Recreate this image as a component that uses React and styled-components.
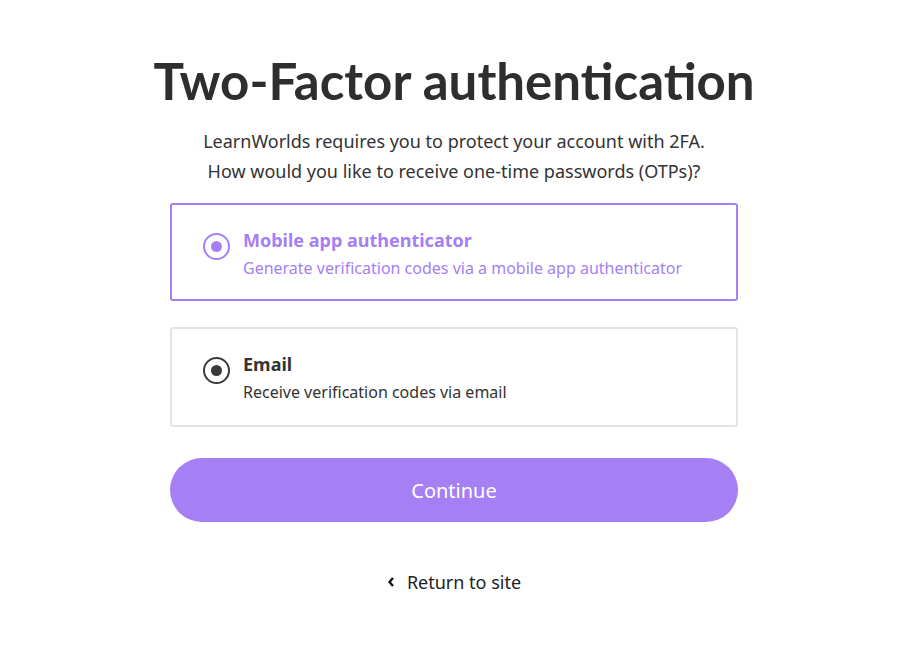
import React, { useState } from 'react';
import styled, { createGlobalStyle } from 'styled-components';

const Global = createGlobalStyle`
  body {
    margin: 0;
    background: #ffffff;
    font-family: 'Noto Sans', 'Lato', sans-serif;
    color: #333333;
  }
`;

const Page = styled.div`
  display: flex;
  flex-direction: column;
  align-items: center;
  padding: 50px 3px 0 0;
`;

const Title = styled.h1`
  font-family: 'Lato', sans-serif;
  font-size: 51px;
  font-weight: 700;
  color: #2e2e2e;
  margin: 0;
  line-height: 62px;
`;

const Intro = styled.p`
  margin: 14px 0 17px;
  text-align: center;
  font-size: 18px;
  line-height: 30px;
  color: #333333;
`;

const Options = styled.div`
  width: 568px;
  display: flex;
  flex-direction: column;
  gap: 26px;
`;

const Option = styled.label`
  display: flex;
  align-items: flex-start;
  gap: 13px;
  box-sizing: border-box;
  height: ${p => (p.$active ? '98px' : '100px')};
  padding: 22px 31px;
  border: 2px solid ${p => (p.$active ? '#a67ff5' : '#e1e3e6')};
  border-radius: 3px;
  cursor: pointer;
  color: ${p => (p.$active ? '#a67ff5' : '#333333')};
`;

const Radio = styled.span`
  flex: none;
  margin-top: 6px;
  width: 27px;
  height: 27px;
  box-sizing: border-box;
  border-radius: 50%;
  border: 2.5px solid ${p => (p.$active ? '#a67ff5' : '#3a3a3a')};
  display: flex;
  align-items: center;
  justify-content: center;
  &::after {
    content: '';
    width: 11px;
    height: 11px;
    border-radius: 50%;
    background: ${p => (p.$active ? '#a67ff5' : '#3a3a3a')};
  }
`;

const OptionText = styled.div`
  display: flex;
  flex-direction: column;
`;

const OptionTitle = styled.span`
  font-size: 18px;
  font-weight: 700;
  line-height: 26px;
`;

const OptionDesc = styled.span`
  font-size: 16px;
  line-height: 30px;
`;

const Button = styled.button`
  margin-top: 31px;
  width: 568px;
  height: 64px;
  border: none;
  border-radius: 32px;
  background: #a67ff5;
  color: #ffffff;
  font-family: inherit;
  font-size: 20px;
  cursor: pointer;
`;

const Back = styled.a`
  margin-top: 48px;
  display: flex;
  align-items: center;
  gap: 12px;
  font-size: 18px;
  color: #222222;
  text-decoration: none;
  cursor: pointer;
`;

const options = [
  {
    id: 'app',
    title: 'Mobile app authenticator',
    desc: 'Generate verification codes via a mobile app authenticator',
  },
  {
    id: 'email',
    title: 'Email',
    desc: 'Receive verification codes via email',
  },
];

export default function App() {
  const [selected] = useState('app');
  return (
    <>
      <Global />
      <Page>
        <Title>Two-Factor authentication</Title>
        <Intro>
          LearnWorlds requires you to protect your account with 2FA.
          <br />
          How would you like to receive one-time passwords (OTPs)?
        </Intro>
        <Options>
          {options.map(o => (
            <Option key={o.id} $active={o.id === selected}>
              <Radio $active={o.id === selected} />
              <OptionText>
                <OptionTitle>{o.title}</OptionTitle>
                <OptionDesc>{o.desc}</OptionDesc>
              </OptionText>
            </Option>
          ))}
        </Options>
        <Button>Continue</Button>
        <Back>
          <svg width="8" height="12" viewBox="0 0 8 12">
            <path d="M6 2 L2.5 6 L6 10" stroke="#111" strokeWidth="2.4" fill="none" />
          </svg>
          Return to site
        </Back>
      </Page>
    </>
  );
}
